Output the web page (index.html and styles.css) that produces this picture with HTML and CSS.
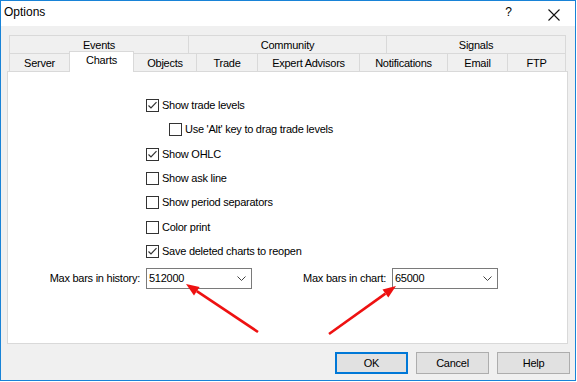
FILE: index.html
```html
<!DOCTYPE html>
<html>
<head>
<meta charset="utf-8">
<title>Options</title>
<link rel="stylesheet" href="styles.css">
</head>
<body>
<div class="window">
  <div class="titlebar">
    <span class="title">Options</span>
    <span class="help">?</span>
    <svg class="close" width="12" height="12" viewBox="0 0 12 12"><path d="M0.5 0.5 L11.5 11.5 M11.5 0.5 L0.5 11.5" stroke="#111" stroke-width="1.1" fill="none"/></svg>
  </div>
  <div class="client">
    <div class="tabs">
      <div class="tabrow">
        <div class="tab t-events">Events</div>
        <div class="tab t-community">Community</div>
        <div class="tab t-signals last">Signals</div>
      </div>
      <div class="tabrow">
        <div class="tab t-server">Server</div>
        <div class="tab t-charts selected">Charts</div>
        <div class="tab t-objects noleft">Objects</div>
        <div class="tab t-trade">Trade</div>
        <div class="tab t-ea">Expert Advisors</div>
        <div class="tab t-notif">Notifications</div>
        <div class="tab t-email">Email</div>
        <div class="tab t-ftp last">FTP</div>
      </div>
    </div>
    <div class="panel">
      <div class="checks">
        <div class="check"><span class="box"><svg width="11" height="11" viewBox="0 0 11 11"><polyline points="1.5,5.5 4,8 9.5,2.2" fill="none" stroke="#333" stroke-width="1.2"/></svg></span><span class="lbl">Show trade levels</span></div>
        <div class="check sub"><span class="box"></span><span class="lbl">Use 'Alt' key to drag trade levels</span></div>
        <div class="check"><span class="box"><svg width="11" height="11" viewBox="0 0 11 11"><polyline points="1.5,5.5 4,8 9.5,2.2" fill="none" stroke="#333" stroke-width="1.2"/></svg></span><span class="lbl">Show OHLC</span></div>
        <div class="check"><span class="box"></span><span class="lbl">Show ask line</span></div>
        <div class="check"><span class="box"></span><span class="lbl">Show period separators</span></div>
        <div class="check"><span class="box"></span><span class="lbl">Color print</span></div>
        <div class="check"><span class="box"><svg width="11" height="11" viewBox="0 0 11 11"><polyline points="1.5,5.5 4,8 9.5,2.2" fill="none" stroke="#333" stroke-width="1.2"/></svg></span><span class="lbl">Save deleted charts to reopen</span></div>
      </div>
      <div class="combos">
        <span class="clabel first">Max bars in history:</span>
        <div class="combo"><span class="cval">512000</span><svg width="9" height="5" viewBox="0 0 9 5"><polyline points="0.5,0.5 4.5,4.5 8.5,0.5" fill="none" stroke="#444" stroke-width="1"/></svg></div>
        <span class="clabel second">Max bars in chart:</span>
        <div class="combo"><span class="cval">65000</span><svg width="9" height="5" viewBox="0 0 9 5"><polyline points="0.5,0.5 4.5,4.5 8.5,0.5" fill="none" stroke="#444" stroke-width="1"/></svg></div>
      </div>
    </div>
    <div class="buttons">
      <div class="btn default">OK</div>
      <div class="btn">Cancel</div>
      <div class="btn">Help</div>
    </div>
  </div>
  <svg class="arrows" width="577" height="382" viewBox="0 0 577 382">
    <line x1="258" y1="332" x2="196.8" y2="291.2" stroke="#ee1111" stroke-width="2.6"/>
    <polygon points="186,284 199.6,287 194,295.4" fill="#ee1111"/>
    <line x1="329" y1="334" x2="385.4" y2="293.6" stroke="#ee1111" stroke-width="2.6"/>
    <polygon points="396,286 388.3,297.6 382.5,289.5" fill="#ee1111"/>
  </svg>
</div>
</body>
</html>
```
FILE: styles.css
```css
html, body {
  margin: 0;
  padding: 0;
  background: #ffffff;
}
body {
  font-family: "Liberation Sans", Arial, sans-serif;
  font-size: 11px;
  letter-spacing: -0.25px;
  color: #000;
}
.window {
  position: relative;
  width: 576px;
  height: 381px;
  box-sizing: border-box;
  border: 1px solid #1883d7;
  background: #f0f0f0;
}
.titlebar {
  height: 25px;
  background: #ffffff;
  display: flex;
  align-items: flex-start;
  line-height: 23px;
  font-size: 12px;
  letter-spacing: 0;
  padding-left: 3px;
}
.help {
  margin-left: auto;
}
.close {
  margin: 8px 15px 0 36px;
}
.client {
  padding: 9px 0 6px 0;
}
.tabs {
  margin: 0 9px 0 8px;
}
.tabrow {
  display: flex;
  height: 18px;
}
.tab {
  box-sizing: border-box;
  height: 18px;
  border-top: 1px solid #d9d9d9;
  border-left: 1px solid #d9d9d9;
  text-align: center;
  line-height: 18px;
  background: #f0f0f0;
}
.tab.last { border-right: 1px solid #d9d9d9; }
.tab.noleft { border-left: none; }
.tab.selected {
  position: relative;
  z-index: 1;
  height: 21px;
  margin-top: -2px;
  background: #ffffff;
  border-right: 1px solid #d9d9d9;
  line-height: 17px;
}
.t-events { width: 179px; }
.t-community { width: 198px; }
.t-signals { width: 180px; }
.t-server { width: 60px; }
.t-charts { width: 65px; }
.t-objects { width: 62px; }
.t-trade { width: 61px; }
.t-ea { width: 102px; }
.t-notif { width: 88px; }
.t-email { width: 60px; }
.t-ftp { width: 59px; }
.panel {
  box-sizing: border-box;
  height: 273px;
  margin: 0 7px 0 6px;
  background: #ffffff;
  border: 1px solid #d9d9d9;
  padding-top: 27px;
}
.checks {
  display: flex;
  flex-direction: column;
  gap: 11.33px;
  padding-left: 138px;
}
.check {
  display: flex;
  align-items: center;
  height: 13px;
  gap: 3px;
}
.check.sub { padding-left: 23px; }
.box {
  box-sizing: border-box;
  width: 13px;
  height: 13px;
  border: 1px solid #333333;
  background: #fff;
  display: flex;
  align-items: center;
  justify-content: center;
}
.box svg { display: block; }
.lbl { line-height: 13px; }
.combos {
  display: flex;
  align-items: center;
  margin-top: 10px;
}
.clabel {
  text-align: right;
  margin-right: 6px;
}
.clabel.first { width: 132px; }
.clabel.second { width: 134px; }
.combo {
  box-sizing: border-box;
  width: 106px;
  height: 21px;
  border: 1px solid #7a7a7a;
  background: #fff;
  display: flex;
  align-items: center;
  justify-content: space-between;
  padding: 0 5px 0 2px;
}
.combo svg { display: block; margin-top: 1px; }
.buttons {
  display: flex;
  justify-content: flex-end;
  gap: 8px;
  margin-top: 8px;
  padding-right: 5px;
}
.btn {
  box-sizing: border-box;
  width: 73px;
  height: 22px;
  border: 1px solid #adadad;
  background: #e1e1e1;
  display: flex;
  align-items: center;
  justify-content: center;
}
.btn.default {
  border: 2px solid #0078d7;
}
.arrows {
  position: absolute;
  left: -1px;
  top: -1px;
  pointer-events: none;
}
```
